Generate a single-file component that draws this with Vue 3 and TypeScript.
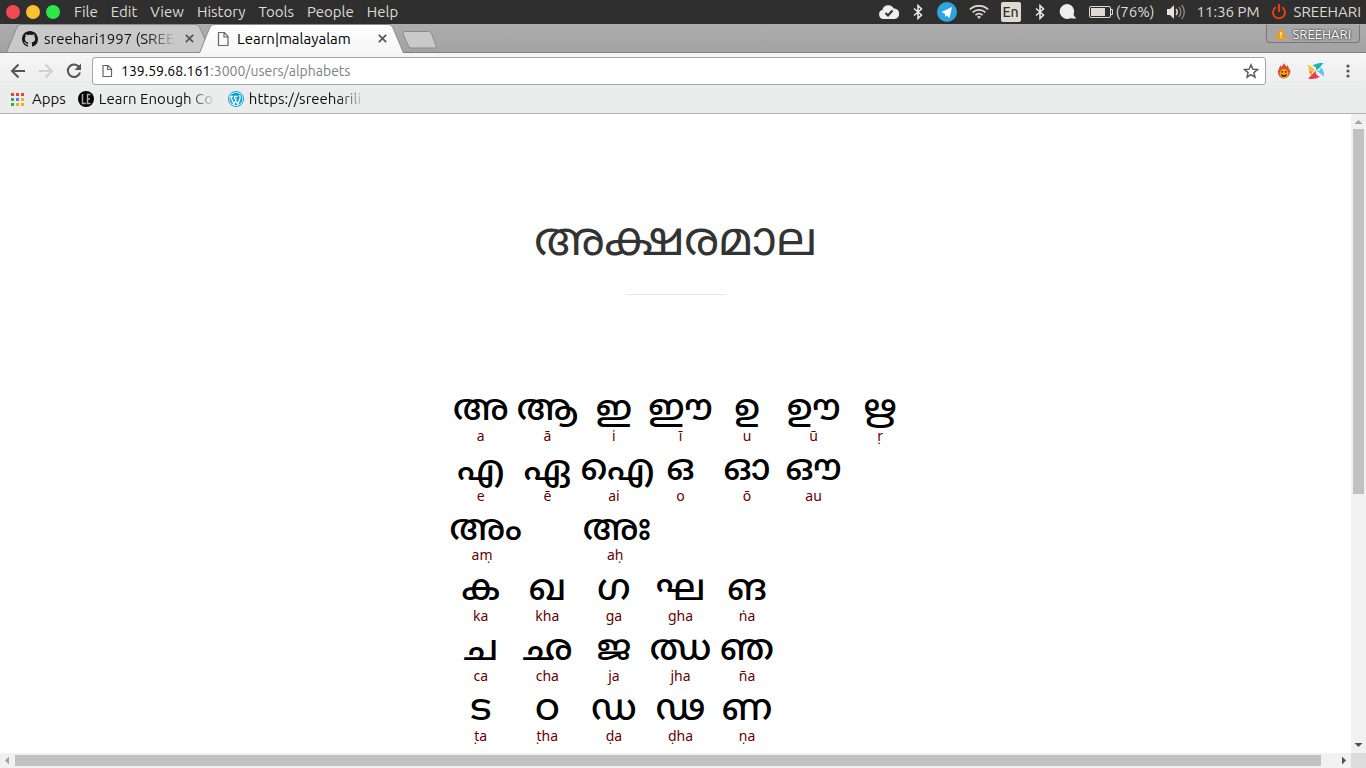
<script setup lang="ts">
import { ref } from 'vue'

interface Letter {
  glyph: string
  roman: string
}

const menus: string[] = ['File', 'Edit', 'View', 'History', 'Tools', 'People', 'Help']
const host = '139.59.68.161'
const path = ':3000/users/alphabets'
const address = ref(host + path)

const parse = (row: string): Letter[] =>
  row.split(' ').map((pair) => {
    const [glyph, roman] = pair.split('/')
    return { glyph, roman }
  })

const vowels: Letter[][] = [
  parse('അ/a ആ/ā ഇ/i ഈ/ī ഉ/u ഊ/ū ഋ/ṛ'),
  parse('എ/e ഏ/ē ഐ/ai ഒ/o ഓ/ō ഔ/au'),
]
const signs: Letter[] = parse('അം/aṃ അഃ/aḥ')
const consonants: Letter[][] = [
  parse('ക/ka ഖ/kha ഗ/ga ഘ/gha ങ/ṅa'),
  parse('ച/ca ഛ/cha ജ/ja ഝ/jha ഞ/ña'),
  parse('ട/ṭa ഠ/ṭha ഡ/ḍa ഢ/ḍha ണ/ṇa'),
]
</script>

<template>
  <div class="screen">
    <header class="menubar">
      <div class="lights">
        <button class="light red" aria-label="Close window"></button>
        <button class="light yellow" aria-label="Minimize window"></button>
        <button class="light green" aria-label="Maximize window"></button>
      </div>
      <nav class="menus">
        <button v-for="m in menus" :key="m">{{ m }}</button>
      </nav>
      <div class="tray">
        <svg class="cloud" width="20" height="14" viewBox="0 0 20 14">
          <path d="M5 14a4.600 4.600 0 0 1-1.600-9A6 6 0 0 1 14.600 3.500 5.200 5.200 0 0 1 15.500 14z" fill="#eee" />
          <path d="M6.500 8l2.500 2.500 4.500-5" fill="none" stroke="#2f2f2f" stroke-width="2" />
        </svg>
        <svg class="bt" width="10" height="16" viewBox="0 0 10 16">
          <path d="M1 4.500l7.500 6.500L5 14.500v-13L8.500 5 1 11.500" fill="none" stroke="#eeebe6" stroke-width="1.500" />
        </svg>
        <svg class="telegram" width="20" height="20" viewBox="0 0 20 20">
          <circle cx="10" cy="10" r="10" fill="#2ca5e0" />
          <path d="M4.500 10L15 5l-2.500 11-3-2.500-1.500 1.500v-3z" fill="#fff" />
        </svg>
        <svg class="wifi" width="20" height="14" viewBox="0 0 20 14">
          <g fill="none" stroke="#dfdbd2" stroke-width="1.700">
            <path d="M.8 4.500C6-.4 14-.4 19.200 4.500" />
            <path d="M3.600 7.400c3.700-3.400 9.100-3.400 12.800 0" />
            <path d="M6.400 10.200c2.200-2 5-2 7.200 0" />
          </g>
          <path d="M8 11.800c1.300-1 2.700-1 4 0l-2 2.200z" fill="#dfdbd2" />
        </svg>
        <span class="lang">En</span>
        <svg class="bt" width="10" height="16" viewBox="0 0 10 16">
          <path d="M1 4.500l7.500 6.500L5 14.500v-13L8.500 5 1 11.500" fill="none" stroke="#eeebe6" stroke-width="1.500" />
        </svg>
        <svg class="chat" width="18" height="16" viewBox="0 0 18 16">
          <path d="M7.500 0a7.500 7.500 0 1 0 4 14.200c2.500.5 4.500.5 6 .1-1.500-1-2.500-2.300-3-3.800A7.500 7.500 0 0 0 7.500 0z" fill="#eee" />
        </svg>
        <svg class="battery" width="24" height="12" viewBox="0 0 24 12">
          <rect x=".5" y=".5" width="21" height="11" rx="1.500" fill="none" stroke="#dfdbd2" />
          <rect x="2" y="2" width="14" height="8" fill="#dfdbd2" />
          <path d="M22 3.500h1.500v5H22" fill="none" stroke="#dfdbd2" />
        </svg>
        <span class="percent">(76%)</span>
        <svg class="volume" width="20" height="16" viewBox="0 0 20 16">
          <path d="M1 5h3l4-4v14l-4-4H1z" fill="#e6e2dc" />
          <path d="M10 5c1.600 1.600 1.600 4.400 0 6" fill="none" stroke="#e6e2dc" stroke-width="1.500" />
          <path d="M12.800 3c2.700 2.800 2.700 7.200 0 10M15.600 1c3.600 3.900 3.600 10.100 0 14" fill="none" stroke="#8a8884" stroke-width="1.400" />
        </svg>
        <span class="clock">11:36 PM</span>
        <svg class="power" width="14" height="16" viewBox="0 0 14 16">
          <path d="M4 3.200a6 6 0 1 0 6 0M7 0v8" fill="none" stroke="#f5420d" stroke-width="1.800" />
        </svg>
        <span>SREEHARI</span>
      </div>
    </header>

    <div class="tabstrip">
      <div class="tab back">
        <svg class="shape" viewBox="0 0 205 29" preserveAspectRatio="none">
          <path d="M.5 28.500L11 3q1.500-2.500 4-2.500H190q2.500 0 4 3.500l10.500 24.500z" fill="#c9c9c9" stroke="#8b8b8b" />
        </svg>
        <svg class="fav" width="16" height="16" viewBox="0 0 16 16">
          <path fill="#191717" d="M8 0C3.580 0 0 3.580 0 8c0 3.540 2.290 6.530 5.470 7.590.4.070.55-.17.55-.38 0-.19-.01-.82-.01-1.490-2.010.37-2.530-.49-2.690-.94-.09-.23-.48-.94-.82-1.130-.28-.15-.68-.52-.01-.53.63-.01 1.080.58 1.230.82.72 1.210 1.870.87 2.330.66.07-.52.28-.87.51-1.070-1.780-.2-3.640-.89-3.640-3.950 0-.87.31-1.590.82-2.150-.08-.2-.36-1.020.08-2.120 0 0 .67-.21 2.200.82.64-.18 1.320-.27 2-.27s1.360.09 2 .27c1.530-1.040 2.200-.82 2.200-.82.44 1.100.16 1.920.08 2.120.51.56.82 1.270.82 2.150 0 3.070-1.870 3.750-3.650 3.950.29.25.54.73.54 1.480 0 1.070-.01 1.930-.01 2.200 0 .21.15.46.55.38A8.010 8.010 0 0 0 16 8c0-4.420-3.580-8-8-8z" />
        </svg>
        <span class="title">sreehari1997 (SREE</span>
        <button class="close" aria-label="Close tab">
          <svg width="9" height="9" viewBox="0 0 9 9"><path d="M.8.8l7.400 7.400M8.200.8L.8 8.200" stroke="#555" stroke-width="1.700" /></svg>
        </button>
      </div>
      <div class="tab front">
        <svg class="shape" viewBox="0 0 205 29" preserveAspectRatio="none">
          <defs>
            <linearGradient id="front" x1="0" y1="0" x2="0" y2="1">
              <stop offset="0" stop-color="#fff" />
              <stop offset="1" stop-color="#f6f6f6" />
            </linearGradient>
          </defs>
          <path d="M.5 29L11 3q1.500-2.500 4-2.500H190q2.500 0 4 3.500L204.500 29" fill="url(#front)" stroke="#8b8b8b" />
        </svg>
        <svg class="fav page" width="16" height="16" viewBox="0 0 16 16">
          <path d="M3.500 1.500h6l3.500 4v9H3.500zM9 1.500V6h4" fill="none" stroke="#666" stroke-width="1.200" />
        </svg>
        <span class="title">Learn|malayalam</span>
        <button class="close" aria-label="Close tab">
          <svg width="9" height="9" viewBox="0 0 9 9"><path d="M.8.8l7.400 7.400M8.200.8L.8 8.200" stroke="#555" stroke-width="1.700" /></svg>
        </button>
      </div>
      <button class="newtab" aria-label="New tab">
        <svg width="36" height="18" viewBox="0 0 36 18">
          <path d="M3.500.5h24q2 0 3 2l4.500 12q.8 2.500-1.500 2.500h-23q-2 0-3-2l-5.500-12Q1.300.5 3.500.5z" fill="#c9c9c9" stroke="#8b8b8b" />
        </svg>
      </button>
      <button class="profile">
        <svg width="12" height="11" viewBox="0 0 12 11">
          <path d="M6 0l6 11H0z" fill="#f39c12" /><path d="M6 4v3.500M6 8.500v1.200" stroke="#fff" stroke-width="1.200" />
        </svg>
        <span>SREEHARI</span>
      </button>
    </div>

    <div class="toolbar">
      <button class="nav" aria-label="Back">
        <svg width="16" height="16" viewBox="0 0 16 16"><path d="M15 8H2.500M8.500 1.500L2 8l6.500 6.500" fill="none" stroke="#555" stroke-width="2" /></svg>
      </button>
      <button class="nav" aria-label="Forward">
        <svg width="16" height="16" viewBox="0 0 16 16"><path d="M1 8h12.500M7.500 1.500L14 8l-6.500 6.500" fill="none" stroke="#d0d0d0" stroke-width="2" /></svg>
      </button>
      <button class="nav" aria-label="Reload">
        <svg width="16" height="16" viewBox="0 0 16 16">
          <path d="M13.200 4.200A6.200 6.200 0 1 0 14 9.500" fill="none" stroke="#555" stroke-width="2" />
          <path d="M15 .5V7H8.500z" fill="#555" />
        </svg>
      </button>
      <label class="omnibox">
        <svg width="16" height="16" viewBox="0 0 16 16">
          <path d="M4 2.500h5L12.500 6v7.500H4zM8.500 2.500v4h4" fill="none" stroke="#666" stroke-width="1.200" />
        </svg>
        <span class="field">
          <input v-model="address" aria-label="Address" />
          <span v-if="address === host + path" class="shown" aria-hidden="true"><b>{{ host }}</b>{{ path }}</span>
        </span>
        <button class="star" aria-label="Bookmark this page">
          <svg width="16" height="16" viewBox="0 0 16 16">
            <path d="M8 1.800l1.800 4.300 4.700.4-3.600 3.100 1.100 4.600L8 11.700l-4 2.500 1.100-4.600-3.600-3.100 4.700-.4z" fill="none" stroke="#555" stroke-width="1.400" />
          </svg>
        </button>
      </label>
      <button class="ext" aria-label="Flame extension">
        <svg width="16" height="16" viewBox="0 0 16 16">
          <path d="M8 0c.4 1.600 2 2.400 2.600 4 .4-.8.8-1.400 1.200-2 .2 2 1.500 3.400 1.600 5.200.4-.3.6-.6.9-1.100.6 5-1.700 9-6.300 9.300C3.500 15.600 1.400 11.500 1.900 6.500c.3.500.6.800 1 1C2.600 5.400 3.900 4 4.200 2.200c.6.400 1 1 1.200 1.800C6.400 2.600 7.600 1.600 8 0z" fill="#e0492a" />
          <circle cx="8" cy="10.600" r="4.500" fill="#f5a81c" />
          <path d="M4.700 11c.8 3.800 5.800 3.800 6.600 0-2 1.300-4.600 1.300-6.600 0z" fill="#3a2312" />
          <circle cx="6.300" cy="8.800" r=".9" fill="#3a2312" /><circle cx="9.700" cy="8.800" r=".9" fill="#3a2312" />
        </svg>
      </button>
      <button class="ext" aria-label="Pinwheel extension">
        <svg width="16" height="16" viewBox="0 0 16 16">
          <path d="M4.500 2.500C8 .3 12-.2 15.500 0L11 5.500 8 7.800C9 5.500 7.500 3.500 4.500 2.500z" fill="#1fb6ac" />
          <path d="M12.500 4C15.500 6.500 16.200 10 15.800 13.500L11 9.500 8 7.800C11 8.300 12.800 7 12.500 4z" fill="#57c8f2" />
          <path d="M12 13.800C8.500 15.900 5 16.200 0 15.800l4.500-4.800L8 7.800c-.8 2.700.8 5 4 6z" fill="#e83c50" />
          <path d="M0 1.500l4.500 3L8 7.800C5 7.500 3.500 9 3.300 12.500 1 9.500 0 5.500 0 1.500z" fill="#f8c63f" />
          <path d="M1 8.500L8 7.800C5 7.500 3.500 9 3.300 12.500 2.200 11.300 1.500 10 1 8.500z" fill="#f08c3a" />
        </svg>
      </button>
      <button class="more" aria-label="Menu">
        <svg width="4" height="14" viewBox="0 0 4 14"><g fill="#555"><circle cx="2" cy="2" r="1.600" /><circle cx="2" cy="7" r="1.600" /><circle cx="2" cy="12" r="1.600" /></g></svg>
      </button>
    </div>

    <nav class="bookmarks">
      <a href="#apps" class="apps">
        <svg width="13" height="13" viewBox="0 0 13 13">
          <path d="M0 0h3v3H0zM5 0h3v3H5zM10 0h3v3h-3z" fill="#ea4335" />
          <path d="M0 5h3v3H0zM0 10h3v3H0z" fill="#34a853" />
          <path d="M5 5h3v3H5z" fill="#4285f4" />
          <path d="M10 5h3v3h-3zM5 10h3v3H5zM10 10h3v3h-3z" fill="#fbab18" />
        </svg>
        <span>Apps</span>
      </a>
      <a href="#learn" class="mark">
        <svg width="16" height="16" viewBox="0 0 16 16">
          <circle cx="8" cy="8" r="8" fill="#000" />
          <path d="M4.500 3v9.500H8M12.500 3.500h-3v9h3M9.500 8H12" fill="none" stroke="#aaa" stroke-width="1.500" />
        </svg>
        <span>Learn Enough Co</span>
      </a>
      <a href="#blog" class="mark">
        <svg width="16" height="16" viewBox="0 0 16 16">
          <circle cx="8" cy="8" r="7.500" fill="#fff" stroke="#0a9fd8" />
          <circle cx="8" cy="8" r="6.300" fill="#0a9fd8" />
          <path d="M2.600 5.500L6 13.500l2.200-6M6 5.500l3.700 8 2.500-6.500c.3-1-.8-2-.8-3M2.500 5.500h2.500M6 5.500h3.500" fill="none" stroke="#fff" stroke-width="1.300" />
        </svg>
        <span>https://sreeharili</span>
      </a>
    </nav>

    <div class="viewport">
      <main class="page">
        <h1>അക്ഷരമാല</h1>
        <hr />
        <table aria-label="അക്ഷരമാല">
          <tbody>
            <tr v-for="(row, i) in vowels" :key="'v' + i">
              <td v-for="l in row" :key="l.roman"><span class="glyph">{{ l.glyph }}</span><span class="roman">{{ l.roman }}</span></td>
            </tr>
            <tr class="signs">
              <td v-for="l in signs" :key="l.roman" colspan="2"><span class="glyph">{{ l.glyph }}</span><span class="roman">{{ l.roman }}</span></td>
            </tr>
            <tr v-for="(row, i) in consonants" :key="'c' + i">
              <td v-for="l in row" :key="l.roman"><span class="glyph">{{ l.glyph }}</span><span class="roman">{{ l.roman }}</span></td>
            </tr>
          </tbody>
        </table>
      </main>
      <div class="vbar">
        <svg width="15" height="15" viewBox="0 0 15 15"><path d="M3.500 10h8l-4-4z" fill="#a3a3a3" /></svg>
        <div class="track"><div class="thumb"></div></div>
        <svg width="15" height="15" viewBox="0 0 15 15"><path d="M3.500 5h8l-4 4z" fill="#505050" /></svg>
      </div>
      <div class="hbar">
        <svg width="15" height="15" viewBox="0 0 15 15"><path d="M9 3.500v8l-4-4z" fill="#a3a3a3" /></svg>
        <div class="track"><div class="thumb"></div></div>
        <svg width="15" height="15" viewBox="0 0 15 15"><path d="M6 3.500v8l4-4z" fill="#505050" /></svg>
      </div>
      <div class="corner"></div>
    </div>
  </div>
</template>

<style>
body {
  margin: 0;
}
</style>

<style scoped>
.screen {
  display: flex;
  flex-direction: column;
  height: 100vh;
  overflow: hidden;
  background: #fff;
  color: #111;
  font: 15px/20px "Ubuntu", "Noto Sans", "Open Sans", sans-serif;
}
button {
  display: block;
  margin: 0;
  padding: 0;
  border: 0;
  background: none;
  color: inherit;
  font: inherit;
}
svg {
  display: block;
  flex: none;
}
a {
  color: inherit;
  text-decoration: none;
}
.menubar {
  flex: none;
  display: flex;
  align-items: center;
  height: 24px;
  padding: 0 5px 0 6px;
  background: #2f2f2f;
  color: #dfdbd2;
  white-space: nowrap;
}
.lights {
  display: flex;
  gap: 6px;
}
.light {
  width: 14px;
  height: 14px;
  border-radius: 50%;
}
.red { background: #f54952; }
.yellow { background: #fcc02e; }
.green { background: #2be84a; }
.menus {
  display: flex;
  gap: 13px;
  margin-left: 14px;
}
.tray {
  display: flex;
  align-items: center;
  margin-left: auto;
}
.cloud, .bt { margin-right: 14px; }
.telegram, .wifi, .chat { margin-right: 12px; }
.lang {
  width: 20px;
  height: 20px;
  margin-right: 14px;
  border-radius: 2px;
  background: #dfdbd2;
  color: #2f2f2f;
  font-size: 14px;
  font-weight: 500;
  text-align: center;
}
.battery { margin-right: 3px; }
.percent, .volume { margin-right: 11px; }
.clock { margin-right: 12px; }
.power { margin-right: 8px; }

.tabstrip {
  flex: none;
  display: flex;
  height: 28px;
  padding-left: 6px;
  border-bottom: 1px solid #808080;
  background: linear-gradient(#adadad, #a2a2a2);
}
.tab {
  position: relative;
  display: flex;
  align-items: center;
  box-sizing: border-box;
  width: 205px;
  height: 29px;
  padding: 0 17px 0 16px;
}
.tab > * { position: relative; }
.tab > .shape {
  position: absolute;
  inset: 0;
  width: 100%;
  height: 100%;
}
.front {
  z-index: 1;
  margin-left: -12px;
  color: #000;
}
.title {
  flex: 1;
  margin: 0 9px 0 6px;
  overflow: hidden;
  white-space: nowrap;
}
.back .title {
  -webkit-mask-image: linear-gradient(90deg, #000 78%, transparent);
  mask-image: linear-gradient(90deg, #000 78%, transparent);
}
.newtab {
  align-self: flex-start;
  margin: 7px 0 0 -3px;
}
.profile {
  display: flex;
  align-items: center;
  gap: 6px;
  height: 18px;
  margin: 1px 6px 0 auto;
  padding: 0 8px;
  border: 1px solid #777;
  border-top: 0;
  border-radius: 0 0 4px 4px;
  background: #a6a6a6;
  color: #fff;
  font-size: 13px;
  text-shadow: 0 0 2px #333, 0 0 2px #333;
}

.toolbar {
  flex: none;
  display: flex;
  align-items: center;
  height: 36px;
  padding: 0 16px 0 10px;
  background: linear-gradient(#f6f6f6, #ebecec);
  font-size: 14px;
}
.nav { margin-right: 12px; }
.nav + .nav + .nav { margin-right: 10px; }
.omnibox {
  flex: 1;
  display: flex;
  align-items: center;
  box-sizing: border-box;
  height: 28px;
  padding: 0 6px;
  border: 1px solid #a5a5a5;
  border-radius: 3px;
  background: #fff;
}
.field {
  flex: 1;
  display: grid;
  margin-left: 6px;
}
.field > * { grid-area: 1 / 1; }
.field input {
  width: 100%;
  padding: 0;
  border: 0;
  outline: 0;
  background: none;
  color: transparent;
  font: inherit;
}
.shown {
  color: #808080;
  pointer-events: none;
}
.shown b {
  color: #000;
  font-weight: 400;
}
.ext { margin-left: 16px; }
.omnibox + .ext { margin-left: 10px; }
.more { margin-left: 22px; }

.bookmarks {
  flex: none;
  display: flex;
  align-items: flex-start;
  height: 24px;
  padding: 0 11px;
  border-bottom: 1px solid #b3b3b3;
  background: #ebecec;
}
.bookmarks a {
  display: flex;
  align-items: center;
  height: 20px;
  white-space: nowrap;
}
.apps { gap: 8px; }
.mark {
  width: 138px;
  gap: 5px;
  margin-left: 12px;
}
.mark span {
  flex: 1;
  overflow: hidden;
  -webkit-mask-image: linear-gradient(90deg, #000 76%, transparent);
  mask-image: linear-gradient(90deg, #000 76%, transparent);
}

.viewport {
  flex: 1;
  min-height: 0;
  display: grid;
  grid-template: minmax(0, 1fr) 15px / minmax(0, 1fr) 15px;
}
.page {
  overflow: hidden;
  font-family: "Noto Sans Malayalam", "Meera", "Rachana", "Noto Sans", sans-serif;
}
h1 {
  margin: 96px 0 0;
  color: #333;
  font-size: 47px;
  line-height: 68px;
  font-weight: 400;
  text-align: center;
}
hr {
  width: 100px;
  height: 1px;
  margin: 16px auto 0;
  border: 0;
  background: #e7e7e7;
}
table {
  width: 466px;
  margin: 97px auto 0;
  border-collapse: collapse;
  table-layout: fixed;
  position: relative;
  left: 5px;
}
td {
  height: 60px;
  padding: 0;
  text-align: center;
  vertical-align: top;
}
.glyph, .roman {
  display: block;
  white-space: nowrap;
}
.glyph {
  color: #000;
  font-size: 36px;
  font-weight: 500;
  line-height: 40px;
}
.roman {
  color: #600;
  font-size: 14px;
  line-height: 12px;
}
.signs td {
  padding: 0 66px 0 2px;
}
.signs .roman {
  line-height: 10px;
}

.vbar {
  display: flex;
  flex-direction: column;
  background: #f1f1f1;
}
.hbar {
  display: flex;
  background: #f1f1f1;
}
.track { flex: 1; }
.thumb { background: #c1c1c1; }
.vbar .thumb {
  height: 60%;
  margin: 0 2px;
}
.hbar .track { padding: 2px 15px 2px 0; }
.hbar .thumb { height: 11px; }
.corner { background: #dcdcdc; }
</style>
